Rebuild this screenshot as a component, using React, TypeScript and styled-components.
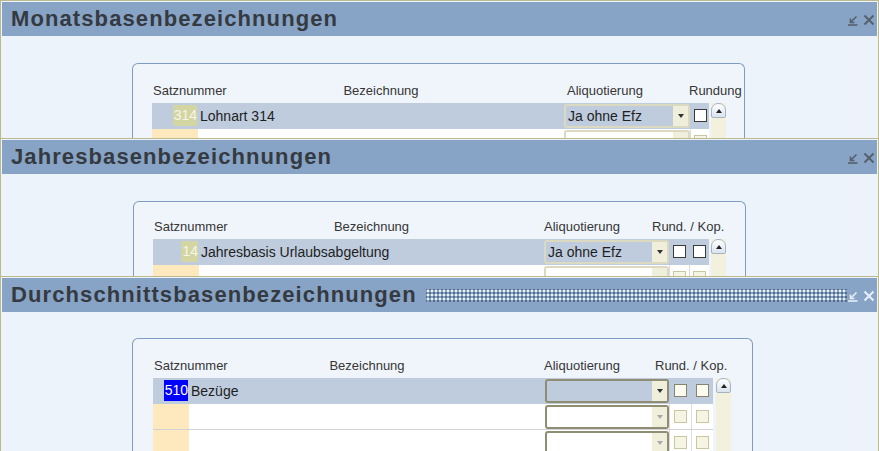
import React from 'react';
import styled, { createGlobalStyle } from 'styled-components';

const GlobalStyle = createGlobalStyle`
  html, body { margin: 0; padding: 0; background: #ffffff; overflow: hidden; }
  body { font-family: "Liberation Sans", Arial, sans-serif; }
`;

const OLIVE = '#bdb98f';
const BAND = '#bfccdd';
const BODY = '#edf3fa';

type RowData = { num?: string; hl?: 'olive' | 'blue'; desc?: string; combo?: string };
type Cfg = {
  title: string;
  active?: boolean;
  height: number;
  bodyTop: number;
  panelLeft: number;
  panelWidth: number;
  padLeft: number;
  headH: number;
  cols: number[];
  cbCount: number;
  scrollGap: number;
  aliDx: number;
  rundDx: number;
  rundLabel: string;
  rows: RowData[];
};

const Desktop = styled.div`
  width: 879px;
  height: 451px;
  overflow: hidden;
  display: flex;
  flex-direction: column;
  background: #ffffff;
`;

const Win = styled.section<{ $h: number }>`
  box-sizing: border-box;
  flex: 0 0 ${p => p.$h}px;
  height: ${p => p.$h}px;
  border: 1px solid ${OLIVE};
  border-bottom: none;
  padding: 1px 1px 0 1px;
  background: ${BODY};
  overflow: hidden;
`;

const TitleBar = styled.header`
  height: 34px;
  background: #87a3c5;
  display: flex;
  align-items: center;
  padding: 0 2px 0 9px;
`;

const Title = styled.h1`
  margin: 0;
  font-family: "Liberation Sans", Arial, sans-serif;
  font-size: 22px;
  font-weight: bold;
  letter-spacing: 1.1px;
  line-height: 26px;
  color: #353a41;
  white-space: nowrap;
`;

const Grip = styled.div`
  flex: 1;
  height: 13px;
  margin: 1px 1px 0 9px;
  background-image: radial-gradient(circle, #eef3f8 0.7px, transparent 1px),
    radial-gradient(circle, #566c89 0.7px, transparent 1px);
  background-size: 4px 4px;
  background-position: 0 0, 2px 2px;
`;

const Icons = styled.div<{ $light?: boolean }>`
  margin-left: auto;
  display: flex;
  align-items: center;
  gap: 5px;
  color: ${p => (p.$light ? '#e9eff6' : '#56606c')};
  padding-top: 2px;
`;

const Body = styled.div<{ $top: number; $left: number }>`
  padding: ${p => p.$top}px 0 0 ${p => p.$left}px;
`;

const Panel = styled.div<{ $w: number; $pad: number }>`
  box-sizing: border-box;
  width: ${p => p.$w}px;
  height: 240px;
  border: 1px solid #7f9cc5;
  border-bottom: none;
  border-radius: 6px 6px 0 0;
  padding-left: ${p => p.$pad}px;
  background: #f0f5fb;
`;

const TableHead = styled.div<{ $cols: string; $h: number }>`
  box-sizing: border-box;
  display: grid;
  grid-template-columns: ${p => p.$cols};
  height: ${p => p.$h}px;
  align-items: end;
  padding-bottom: 5px;
  font-size: 13px;
  line-height: 15px;
  color: #363636;
`;

const HeadLabel = styled.div<{ $dx?: number; $center?: boolean; $span?: string }>`
  margin-left: ${p => p.$dx ?? 0}px;
  text-align: ${p => (p.$center ? 'center' : 'left')};
  white-space: nowrap;
  grid-column: ${p => p.$span ?? 'auto'};
`;

const TableBody = styled.div`
  display: flex;
  align-items: flex-start;
`;

const Rows = styled.div`
  display: flex;
  flex-direction: column;
`;

const Row = styled.div<{ $cols: string; $sel: boolean }>`
  box-sizing: border-box;
  display: grid;
  grid-template-columns: ${p => p.$cols};
  height: 26px;
  border-bottom: 1px solid ${p => (p.$sel ? BAND : '#d3d3d3')};
  background: ${p => (p.$sel ? BAND : '#ffffff')};
`;

const NumCell = styled.div<{ $sel: boolean }>`
  background: ${p => (p.$sel ? BAND : '#fde9bd')};
  display: flex;
  align-items: center;
  justify-content: flex-end;
  padding-right: 1px;
  font-size: 14px;
`;

const NumMark = styled.span<{ $hl: 'olive' | 'blue' }>`
  background: ${p => (p.$hl === 'blue' ? '#0000ff' : '#d3d5a3')};
  color: ${p => (p.$hl === 'blue' ? '#ffffff' : '#f6f6e6')};
  line-height: 21px;
  padding: 0 0 0 1px;
`;

const DescCell = styled.div`
  display: flex;
  align-items: center;
  padding-left: 2px;
  font-size: 14px;
  color: #1e1e1e;
  white-space: nowrap;
  overflow: hidden;
`;

const ComboCell = styled.div`
  display: flex;
  align-items: center;
`;

const Combo = styled.div<{ $sel: boolean; $active: boolean }>`
  box-sizing: border-box;
  width: 100%;
  height: 24px;
  border: 2px solid ${p => (p.$active ? '#8f8e74' : '#dbdac0')};
  border-radius: 3px;
  background: ${p => (p.$sel ? BAND : '#ffffff')};
  display: flex;
  align-items: stretch;
`;

const ComboText = styled.span`
  flex: 1;
  padding-left: 2px;
  font-size: 14px;
  line-height: 20px;
  color: #1e1e1e;
  white-space: nowrap;
`;

const ComboArrow = styled.span<{ $dim: boolean }>`
  width: 15px;
  background: #f0efdc;
  display: flex;
  align-items: center;
  justify-content: center;
  &::after {
    content: '';
    border-left: 3.5px solid transparent;
    border-right: 3.5px solid transparent;
    border-top: 4px solid ${p => (p.$dim ? '#a9a9a9' : '#333333')};
  }
`;

const CbCell = styled.div<{ $sel: boolean }>`
  background: ${p => (p.$sel ? BAND : '#ffffff')};
  border-left: 1px solid ${p => (p.$sel ? BAND : '#dcdcdc')};
  display: flex;
  align-items: center;
  justify-content: center;
`;

const Box = styled.span<{ $mode: 'sharp' | 'warm' | 'dim' }>`
  box-sizing: border-box;
  width: 13px;
  height: 13px;
  border: 1px solid
    ${p => (p.$mode === 'sharp' ? '#3a3a3a' : p.$mode === 'warm' ? '#85846a' : '#c8c7a2')};
  background: ${p => (p.$mode === 'sharp' ? '#ffffff' : p.$mode === 'warm' ? '#fbfbef' : '#f6f5e3')};
`;

const Scroll = styled.div<{ $gap: number }>`
  width: 15px;
  height: 78px;
  margin-left: ${p => p.$gap}px;
  background: #f2f1de;
`;

const ScrollUp = styled.div`
  box-sizing: border-box;
  height: 15px;
  border: 1px solid #a7b2c2;
  border-radius: 7px 7px 2px 2px;
  background: linear-gradient(#ffffff, #dbe3ee);
  display: flex;
  align-items: center;
  justify-content: center;
  &::after {
    content: '';
    border-left: 3.5px solid transparent;
    border-right: 3.5px solid transparent;
    border-bottom: 4px solid #222222;
  }
`;

const MinIcon = () => (
  <svg width="10" height="11" viewBox="0 0 10 11" fill="none" stroke="currentColor" strokeWidth="1.6">
    <path d="M8.5 1.5 L3 7" />
    <path d="M2.5 3.5 V7.5 H6.5" />
    <path d="M0 10 H9.5" />
  </svg>
);

const CloseIcon = () => (
  <svg width="12" height="12" viewBox="0 0 12 12" fill="none" stroke="currentColor" strokeWidth="2">
    <path d="M1.5 1.5 L10.5 10.5 M10.5 1.5 L1.5 10.5" />
  </svg>
);

const Window: React.FC<{ c: Cfg }> = ({ c }) => {
  const cols = c.cols.map(n => `${n}px`).join(' ');
  const headCols = `${cols} ${c.scrollGap}px 15px`;
  const cbStart = 4;
  return (
    <Win $h={c.height}>
      <TitleBar>
        <Title>{c.title}</Title>
        {c.active && <Grip />}
        <Icons $light={c.active}>
          <MinIcon />
          <CloseIcon />
        </Icons>
      </TitleBar>
      <Body $top={c.bodyTop} $left={c.panelLeft}>
        <Panel $w={c.panelWidth} $pad={c.padLeft}>
          <TableHead $cols={headCols} $h={c.headH}>
            <HeadLabel $dx={1}>Satznummer</HeadLabel>
            <HeadLabel $center>Bezeichnung</HeadLabel>
            <HeadLabel $dx={c.aliDx}>Aliquotierung</HeadLabel>
            <HeadLabel $dx={c.rundDx} $span={`${cbStart} / -1`}>
              {c.rundLabel}
            </HeadLabel>
          </TableHead>
          <TableBody>
            <Rows>
              {c.rows.map((r, i) => {
                const sel = i === 0;
                return (
                  <Row key={i} $cols={cols} $sel={sel}>
                    <NumCell $sel={sel}>{r.num && <NumMark $hl={r.hl ?? 'olive'}>{r.num}</NumMark>}</NumCell>
                    <DescCell>{r.desc}</DescCell>
                    <ComboCell>
                      <Combo $sel={sel} $active={!!c.active}>
                        <ComboText>{r.combo}</ComboText>
                        <ComboArrow $dim={!sel} />
                      </Combo>
                    </ComboCell>
                    {Array.from({ length: c.cbCount }).map((_, k) => (
                      <CbCell key={k} $sel={sel}>
                        <Box $mode={sel ? (c.active ? 'warm' : 'sharp') : 'dim'} />
                      </CbCell>
                    ))}
                  </Row>
                );
              })}
            </Rows>
            <Scroll $gap={c.scrollGap}>
              <ScrollUp />
            </Scroll>
          </TableBody>
        </Panel>
      </Body>
    </Win>
  );
};

const windows: Cfg[] = [
  {
    title: 'Monatsbasenbezeichnungen',
    height: 138,
    bodyTop: 27,
    panelLeft: 130,
    panelWidth: 613,
    padLeft: 19,
    headH: 39,
    cols: [46, 366, 126, 19],
    cbCount: 1,
    scrollGap: 2,
    aliDx: 3,
    rundDx: -1,
    rundLabel: 'Rundung',
    rows: [{ num: '314', hl: 'olive', desc: 'Lohnart 314', combo: 'Ja ohne Efz' }, {}, {}],
  },
  {
    title: 'Jahresbasenbezeichnungen',
    height: 138,
    bodyTop: 27,
    panelLeft: 131,
    panelWidth: 613,
    padLeft: 19,
    headH: 37,
    cols: [46, 345, 125, 20, 20],
    cbCount: 2,
    scrollGap: 2,
    aliDx: 0,
    rundDx: -17,
    rundLabel: 'Rund. / Kop.',
    rows: [{ num: '14', hl: 'olive', desc: 'Jahresbasis Urlaubsabgeltung', combo: 'Ja ohne Efz' }, {}, {}],
  },
  {
    title: 'Durchschnittsbasenbezeichnungen',
    active: true,
    height: 175,
    bodyTop: 26,
    panelLeft: 130,
    panelWidth: 621,
    padLeft: 20,
    headH: 39,
    cols: [36, 356, 124, 22, 22],
    cbCount: 2,
    scrollGap: 3,
    aliDx: -1,
    rundDx: -14,
    rundLabel: 'Rund. / Kop.',
    rows: [{ num: '510', hl: 'blue', desc: 'Bezüge', combo: '' }, {}, {}],
  },
];

export default function App() {
  return (
    <>
      <GlobalStyle />
      <Desktop>
        {windows.map(w => (
          <Window key={w.title} c={w} />
        ))}
      </Desktop>
    </>
  );
}
